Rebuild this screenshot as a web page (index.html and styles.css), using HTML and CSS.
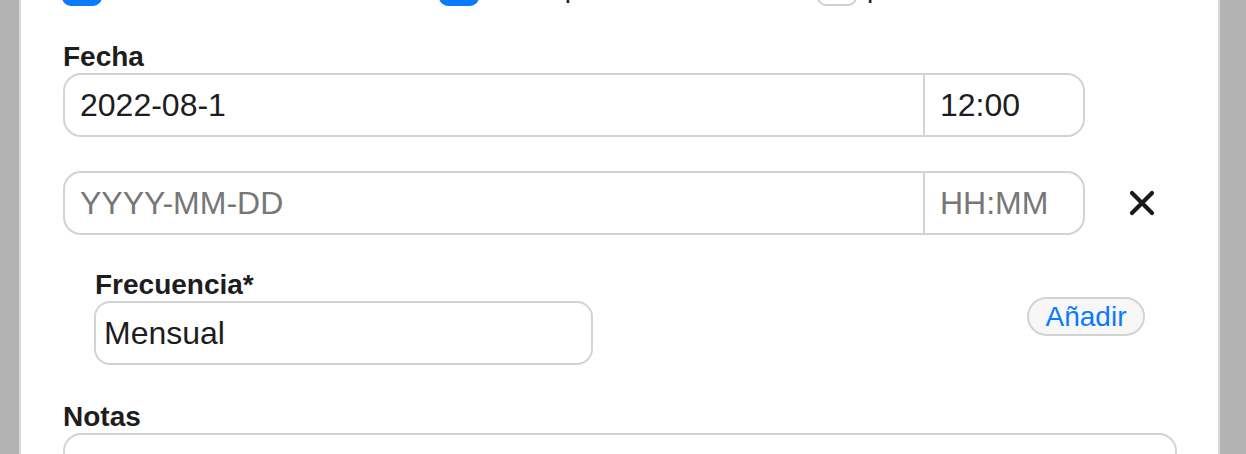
FILE: index.html
```html
<!DOCTYPE html>
<html lang="es">
<head>
  <meta charset="UTF-8" />
  <meta name="viewport" content="width=device-width, initial-scale=1.0">
  <title>Nuevo evento</title>
  <link rel="stylesheet" href="styles.css">
</head>
<body>
  <div class="panel">
    <div class="checks">
      <label class="check"><input type="checkbox" checked> Todo el día</label>
      <label class="check"><input type="checkbox" checked> Aviso previo</label>
      <label class="check"><input type="checkbox"> privado</label>
    </div>

    <div class="group">
      <div class="field-label">Fecha</div>
      <div class="date-row">
        <div class="datetime">
          <input class="date-input" type="text" value="2022-08-1" placeholder="YYYY-MM-DD">
          <input class="time-input" type="text" value="12:00" placeholder="HH:MM">
        </div>
      </div>
    </div>

    <div class="group">
      <div class="date-row">
        <div class="datetime">
          <input class="date-input" type="text" placeholder="YYYY-MM-DD">
          <input class="time-input" type="text" placeholder="HH:MM">
        </div>
        <button class="remove" title="Quitar fecha">
          <svg width="26" height="26" viewBox="0 0 26 26">
            <path d="M3 3 L23 23 M23 3 L3 23" stroke="#1a1a1a" stroke-width="4.2" stroke-linecap="round" fill="none"/>
          </svg>
        </button>
      </div>
    </div>

    <div class="group freq">
      <div class="freq-field">
        <div class="field-label">Frecuencia*</div>
        <div class="select-box">Mensual</div>
      </div>
      <button class="add-btn">Añadir</button>
    </div>

    <div class="group notes-group">
      <div class="field-label">Notas</div>
      <textarea class="notes"></textarea>
    </div>
  </div>
</body>
</html>
```

FILE: styles.css
```css
* { margin: 0; padding: 0; box-sizing: border-box; }

body {
  font-family: 'Liberation Sans', Arial, Helvetica, sans-serif;
  background: #b3b3b3;
  color: #1d1d1f;
  height: 100vh;
  overflow: hidden;
}

.panel {
  display: flow-root;
  margin-left: 19px;
  width: 1201px;
  min-height: 100vh;
  background: #fff;
  border-left: 2px solid #d9d9d9;
  border-right: 2px solid #d9d9d9;
  padding: 0 41px 0 42px;
}

.checks {
  display: grid;
  grid-template-columns: 377px 378px 1fr;
  margin-top: -34px;
  margin-left: -1px;
  height: 40px;
}

.check {
  display: flex;
  align-items: center;
  gap: 10px;
  font-size: 28px;
  line-height: 1.2;
  padding-top: 4px;
}

.check input {
  appearance: none;
  -webkit-appearance: none;
  width: 40px;
  height: 40px;
  border: 2px solid #cfcfcf;
  border-radius: 9px;
  background: #fff;
  margin-top: -4px;
}

.check input:checked {
  background: #0a7aff;
  border-color: #0a7aff;
}

.group {
  margin-top: 34px;
}

.field-label {
  font-size: 28px;
  font-weight: bold;
  line-height: 33px;
  color: #1d1d1f;
}

.date-row {
  display: flex;
  align-items: center;
}

.datetime {
  display: flex;
  width: 1022px;
  height: 64px;
  border: 2px solid #d3d3d3;
  border-radius: 18px;
  overflow: hidden;
}

.datetime input {
  font: inherit;
  font-size: 32px;
  color: #1d1d1f;
  border: none;
  outline: none;
  background: transparent;
  padding: 0 15px;
  min-width: 0;
}

.datetime input::placeholder {
  color: #777;
}

.date-input {
  flex: 1;
}

.time-input {
  width: 160px;
  border-left: 2px solid #d3d3d3 !important;
}

.remove {
  display: flex;
  margin-left: 44px;
  border: none;
  background: none;
}

.freq {
  display: flex;
  align-items: center;
  justify-content: space-between;
  padding: 0 32px 0 31px;
  margin-top: 33px;
}

.freq .field-label {
  padding-left: 1px;
}

.select-box {
  width: 499px;
  height: 64px;
  border: 2px solid #d3d3d3;
  border-radius: 16px;
  font-size: 32px;
  line-height: 60px;
  padding-left: 8px;
}

.add-btn {
  font: inherit;
  font-size: 28px;
  color: #0a7aff;
  background: #f7f7f7;
  border: 2px solid #d3d3d3;
  border-radius: 20px;
  height: 39px;
  width: 118px;
  line-height: 33px;
}

.notes-group {
  margin-top: 35px;
}

.notes {
  display: block;
  width: 100%;
  height: 120px;
  border: 2px solid #d3d3d3;
  border-radius: 18px;
  resize: none;
}
```
